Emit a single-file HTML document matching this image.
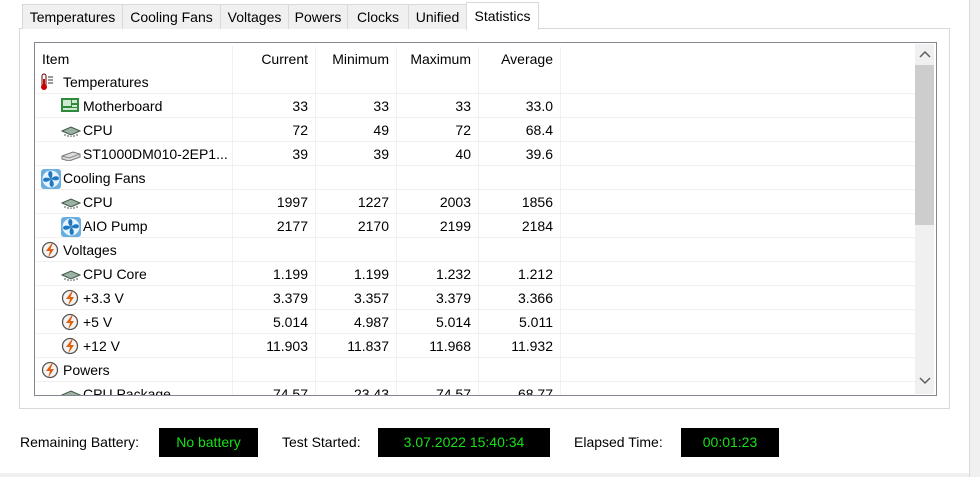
<!DOCTYPE html><html><head><style>
*{margin:0;padding:0;box-sizing:border-box}
body{width:980px;height:477px;background:#fff;font-family:"Liberation Sans",sans-serif;font-size:14px;color:#000;position:relative;overflow:hidden}
.a{position:absolute}
.tab{position:absolute;top:4px;height:25px;background:#f0f0f0;border:1px solid #d9d9d9;border-bottom:none;text-align:center;line-height:25px;font-size:14px}
.row{position:absolute;left:0;width:880px;height:24px;border-bottom:1px solid #f0f0f0}
.c{position:absolute;top:0;height:23px;line-height:24px;text-align:right;border-right:1px solid #f0f0f0}
.it{position:absolute;top:0;height:23px;line-height:24px;white-space:nowrap}
.box{position:absolute;top:428px;height:29px;background:#000;color:#18e018;text-align:center;line-height:29px}
.lb{position:absolute;top:434px}
svg{position:absolute}
</style></head><body>
<div class="a" style="left:0;top:473px;width:980px;height:4px;background:#f0f0f0"></div>
<div class="a" style="left:969px;top:0;width:11px;height:477px;background:#f0f0f0;border-left:1px solid #dadada"></div>
<div class="a" style="left:19px;top:28px;width:931px;height:381px;border:1px solid #d9d9d9;background:#fff"></div>
<div class="tab" style="left:22px;width:101px">Temperatures</div>
<div class="tab" style="left:122px;width:99px">Cooling Fans</div>
<div class="tab" style="left:220px;width:69px">Voltages</div>
<div class="tab" style="left:288px;width:60px">Powers</div>
<div class="tab" style="left:347px;width:62px">Clocks</div>
<div class="tab" style="left:408px;width:59px">Unified</div>
<div class="tab" style="left:466px;width:73px;top:2px;height:28px;background:#fff;line-height:27px">Statistics</div>
<div class="a" style="left:34px;top:42px;width:903px;height:354px;border:1px solid #828790;overflow:hidden;background:#fff">
<div class="a" style="left:880px;top:1px;width:19px;height:350px;background:#f0f0f0"></div>
<div class="a" style="left:880px;top:22px;width:19px;height:160px;background:#cdcdcd"></div>
<svg style="left:884px;top:8px" width="12" height="8"><path d="M1 6L6 1L11 6" stroke="#606060" stroke-width="1.5" fill="none"/></svg>
<svg style="left:884px;top:334px" width="12" height="8"><path d="M1 1L6 6L11 1" stroke="#606060" stroke-width="1.5" fill="none"/></svg>
<div id="t" class="a" style="left:0;top:3px;width:880px;height:350px"></div>
</div>
<div class="lb" style="left:20px">Remaining Battery:</div>
<div class="box" style="left:159px;width:99px">No battery</div>
<div class="lb" style="left:282px">Test Started:</div>
<div class="box" style="left:378px;width:172px">3.07.2022 15:40:34</div>
<div class="lb" style="left:574px">Elapsed Time:</div>
<div class="box" style="left:681px;width:98px">00:01:23</div>
<script>
var I={
th:'<svg width="14" height="18" viewBox="0 0 14 18"><rect x="1" y="1" width="4" height="12" rx="2" fill="#fff" stroke="#600" /><rect x="2" y="6" width="2" height="7" fill="#c00"/><circle cx="3" cy="14" r="3" fill="#c00"/><path d="M7 4h5M7 7h5M7 10h5" stroke="#333"/></svg>',
mb:'<svg width="18" height="16"><rect x="0" y="1" width="18" height="14" fill="#2e8b3e"/><rect x="2" y="3" width="8" height="6" fill="#cfe8cf"/><rect x="11" y="3" width="5" height="3" fill="#cfe8cf"/><rect x="11" y="8" width="5" height="2" fill="#cfe8cf"/><rect x="2" y="11" width="14" height="2" fill="#cfe8cf"/></svg>',
cpu:'<svg width="20" height="12"><path d="M1 6L10 2L19 6L10 10Z" fill="#9eb0a4" stroke="#3b5b45"/><path d="M4 9v2M7 10v2M10 11v1M13 10v2M16 9v2" stroke="#555"/></svg>',
hd:'<svg width="20" height="12"><path d="M1 7L12 3L19 5L19 8L8 12L1 10Z" fill="#ddd" stroke="#777"/><path d="M1 7L8 9L19 5" stroke="#888" fill="none"/></svg>',
fan:'<svg width="20" height="20"><rect x="0" y="0" width="20" height="20" rx="3" fill="#6aaee0"/><circle cx="10" cy="10" r="8.5" fill="#e8f4ff"/><g fill="#1f78c0"><path d="M10 10C7 8 6 3 9 2C12 2 12 7 10 10Z"/><path d="M10 10C12 7 17 6 18 9C18 12 13 12 10 10Z"/><path d="M10 10C13 12 14 17 11 18C8 18 8 13 10 10Z"/><path d="M10 10C8 13 3 14 2 11C2 8 7 8 10 10Z"/></g></svg>',
vo:'<svg width="18" height="18"><circle cx="9" cy="9" r="7.5" fill="#f4f4f4" stroke="#555" stroke-width="1.3"/><path d="M11 2L5 10H9L7 17L13 8H9.5L12 2Z" fill="#e06010"/></svg>'
};
var R=[
['th',0,'Temperatures'],['mb',1,'Motherboard','33','33','33','33.0'],['cpu',1,'CPU','72','49','72','68.4'],['hd',1,'ST1000DM010-2EP1...','39','39','40','39.6'],
['fan',0,'Cooling Fans'],['cpu',1,'CPU','1997','1227','2003','1856'],['fan',1,'AIO Pump','2177','2170','2199','2184'],
['vo',0,'Voltages'],['cpu',1,'CPU Core','1.199','1.199','1.232','1.212'],['vo',1,'+3.3 V','3.379','3.357','3.379','3.366'],['vo',1,'+5 V','5.014','4.987','5.014','5.011'],['vo',1,'+12 V','11.903','11.837','11.968','11.932'],
['vo',0,'Powers'],['cpu',1,'CPU Package','74.57','23.43','74.57','68.77']];
var cols=[[0,198],[198,83],[281,81],[362,82],[444,82]];
var h='<div class="row" style="top:0;border:none"><div class="it" style="left:7px;top:1px">Item</div>';
var H=['Current','Minimum','Maximum','Average'];
for(var k=1;k<5;k++)h+='<div class="c" style="left:'+cols[k][0]+'px;width:'+cols[k][1]+'px;padding-right:7px;top:1px">'+H[k-1]+'</div>';
h+='<div class="c" style="left:0;width:198px"></div></div>';
R.forEach(function(r,i){var t=24+i*24;h+='<div class="row" style="top:'+t+'px">';
for(var k=0;k<5;k++)h+='<div class="c" style="left:'+cols[k][0]+'px;width:'+cols[k][1]+'px;padding-right:7px">'+(k&&r[2+k]?r[2+k]:'')+'</div>';
var x=r[1]?26:6;
h+='<div class="it" style="left:'+x+'px;width:24px;height:23px">'+I[r[0]].replace('<svg','<svg style="left:0;top:'+(r[0]=='cpu'||r[0]=='hd'?7:3)+'px"')+'</div>';
h+='<div class="it" style="left:'+(x+22)+'px">'+r[2]+'</div></div>';});
document.getElementById('t').innerHTML=h;
</script>
</body></html>
